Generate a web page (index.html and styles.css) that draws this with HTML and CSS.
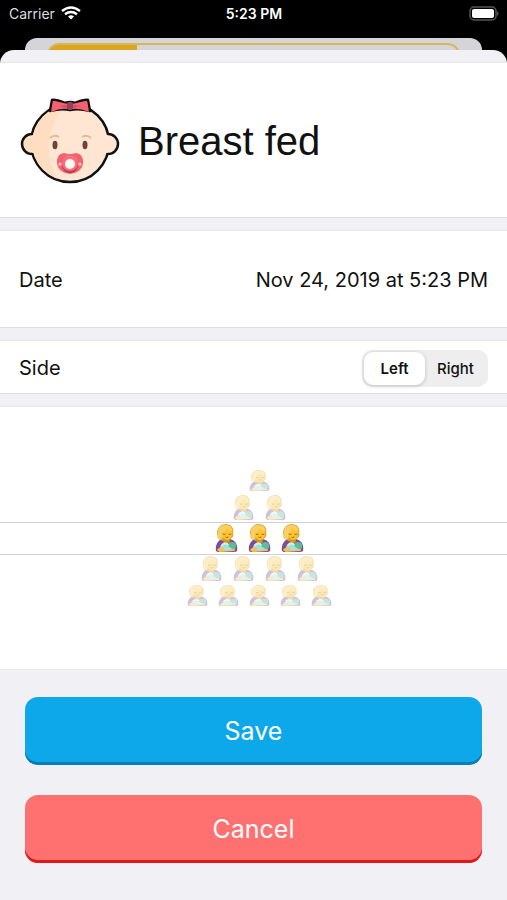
FILE: index.html
```html
<!DOCTYPE html>
<html lang="en">
<head>
    <meta charset="UTF-8">
    <meta name="viewport" content="width=device-width, initial-scale=1.0">
    <title>Breast fed</title>
    <link rel="stylesheet" href="styles.css">
</head>
<body>
    <svg class="defs" aria-hidden="true">
        <symbol id="nursing" viewBox="0 0 24 28" preserveAspectRatio="none">
            <path d="M1 27 C0 21 3 16 9 14 L15 15 C21 16 24 20 23 27 Q22 28 19 28 L3 28Z" fill="#7f4a9a"/>
            <path d="M5 15 C2 14 3 11 2 9 C2 4 6 0 11 0 C17 0 20 4 19 9 C20 12 18 14 16 15 L8 17Z" fill="#e5a92c"/>
            <path d="M9 13 L16 14 L15 19 L9 19Z" fill="#d99518"/>
            <path d="M7 7 C9 5 11 4 12 3 C14 5 17 6 18 8 C18 12 16 16 13 16 C9 16 7 12 7 7Z" fill="#fbc52f"/>
            <path d="M5 16 C1 14 3 11 3 8 C3 3 7 1 11 1 C15 1 18 3 18 7 C15 7 13 5 12 4 C11 7 8 8 8 10 C8 13 8 15 5 16Z" fill="#f6cf67"/>
            <path d="M8 10 q2 1 3 0 M14 10 q1 1 3 0 M11 13 q1 1 3 0" stroke="#97600f" fill="none"/>
            <path d="M5 24 C6 19 10 17 14 20 L16 26 L10 27Z" fill="#9bdcdd"/>
            <path d="M7 22 Q11 17 15 22" stroke="#d4f0ec" stroke-width="2" fill="none"/>
            <ellipse cx="18" cy="22" rx="4" ry="4" fill="#5cbd98"/>
            <path d="M2 26 Q5 22 9 24 L20 25 Q22 26 20 27 L5 28Z" fill="#f1c452"/>
            <path d="M9 23 Q14 21 18 25 L12 27 Q9 26 9 23Z" fill="#a8dfdf"/>
        </symbol>
    </svg>

    <header class="status-bar">
        <div class="carrier">
            <span>Carrier</span>
            <svg width="20" height="14" viewBox="0 0 20 14" aria-hidden="true">
                <g fill="none" stroke="#fff" stroke-width="2.4">
                    <path d="M1 5 Q10 -2 19 5"/>
                    <path d="M4 8.200 Q10 3.800 16 8.200"/>
                </g>
                <path d="M7 10.400 Q10 8 13 10.400 L10 13.600Z" fill="#fff"/>
            </svg>
        </div>
        <span class="time">5:23 PM</span>
        <svg class="battery" width="30" height="15" viewBox="0 0 30 15" aria-hidden="true">
            <rect x="1" y="1" width="26" height="13" rx="4" fill="#000" stroke="#555" stroke-width="1.500"/>
            <rect x="3" y="3" width="22" height="9" rx="2" fill="#fff"/>
            <path d="M28 5 q3 2.500 0 5Z" fill="#555"/>
        </svg>
    </header>

    <div class="back-card"><div class="back-progress"></div></div>

    <main class="sheet">
        <section class="cell title-cell">
            <svg width="101" height="88" viewBox="0 0 101 88" aria-hidden="true">
                <defs>
                    <clipPath id="face"><circle cx="51" cy="46" r="38"/></clipPath>
                </defs>
                <g stroke="#111" stroke-width="2.500">
                    <circle cx="13" cy="47" r="10" fill="#ffddc0"/>
                    <circle cx="89" cy="47" r="10" fill="#ffe6d2"/>
                    <circle cx="51" cy="46" r="39" fill="#ffe6d2"/>
                </g>
                <g clip-path="url(#face)">
                    <path d="M0 0 H58 C28 18 20 58 43 90 H0Z" fill="#ffddc0"/>
                </g>
                <circle cx="14" cy="47" r="9" fill="#ffddc0"/>
                <circle cx="88" cy="47" r="9" fill="#ffe6d2"/>
                <path d="M33 3 Q36 2 46 6 Q51 4 56 6 Q66 2 69 3 L71 14 Q60 11 51 13 Q42 11 31 14Z" fill="#f5616f" stroke="#111" stroke-width="2.500" stroke-linejoin="round"/>
                <path d="M32 15 L34 4 Q41 5 49 7 V12 Q41 11 32 15Z M70 15 L68 4 Q61 5 53 7 V12 Q61 11 70 15Z" fill="#f5616f"/>
                <path d="M40 9 L48 8 V11Z M62 9 L54 8 V11Z" fill="#d84c62"/>
                <rect x="48" y="5" width="6" height="8" rx="2" fill="#96405a"/>
                <path d="M31 41 Q35 37 40 40 M63 40 Q68 37 72 41" fill="none" stroke="#e3b997" stroke-width="2"/>
                <ellipse cx="36" cy="48" rx="2.500" ry="4.200" fill="#70403b"/>
                <ellipse cx="66" cy="48" rx="2.500" ry="4.200" fill="#70403b"/>
                <path d="M45 56 Q51 58 57 56 Q65 57 64 67 Q62 76 51 77 Q40 76 38 67 Q37 57 45 56Z" fill="#f4626f"/>
                <circle cx="51" cy="68" r="8" fill="#b83c50"/>
                <circle cx="51" cy="66" r="8" fill="#f4707c"/>
                <circle cx="51" cy="67" r="5" fill="#fff8ef"/>
                <circle cx="41" cy="67" r="1.500" fill="#ffd2cd"/>
                <circle cx="61" cy="67" r="1.500" fill="#ffd2cd"/>
            </svg>
            <h1>Breast fed</h1>
        </section>

        <section class="cell date-cell">
            <span>Date</span>
            <time datetime="2019-11-24T17:23">Nov 24, 2019 at 5:23 PM</time>
        </section>

        <section class="cell side-cell">
            <span id="side-label">Side</span>
            <div class="segmented" role="radiogroup" aria-labelledby="side-label">
                <input type="radio" name="side" id="left" checked>
                <label for="left">Left</label>
                <input type="radio" name="side" id="right">
                <label for="right">Right</label>
            </div>
        </section>

        <section class="picker">
            <div class="picker-row far"><svg><use href="#nursing"/></svg></div>
            <div class="picker-row near"><svg><use href="#nursing"/></svg><svg><use href="#nursing"/></svg></div>
            <div class="picker-row selected"><svg><use href="#nursing"/></svg><svg><use href="#nursing"/></svg><svg><use href="#nursing"/></svg></div>
            <div class="picker-row near"><svg><use href="#nursing"/></svg><svg><use href="#nursing"/></svg><svg><use href="#nursing"/></svg><svg><use href="#nursing"/></svg></div>
            <div class="picker-row far"><svg><use href="#nursing"/></svg><svg><use href="#nursing"/></svg><svg><use href="#nursing"/></svg><svg><use href="#nursing"/></svg><svg><use href="#nursing"/></svg></div>
        </section>

        <div class="actions">
            <button type="button" class="save">Save</button>
            <button type="button" class="cancel">Cancel</button>
        </div>
    </main>
</body>
</html>
```
FILE: styles.css
```css
* { box-sizing: border-box; }
body {
    margin: 0;
    min-height: 100vh;
    display: flex;
    flex-direction: column;
    background: #000;
    color: #111;
    font-family: Inter, "Liberation Sans", sans-serif;
    font-size: 20px;
}
.defs { position: absolute; width: 0; height: 0; }

.status-bar {
    display: grid;
    grid-template-columns: 1fr auto 1fr;
    align-items: center;
    height: 38px;
    padding: 0 8px 12px 9px;
    color: #fff;
    font-size: 14px;
}
.carrier { display: flex; align-items: center; gap: 6px; color: #ddd; }
.time { font-weight: 600; }
.battery { justify-self: end; }

.back-card {
    height: 12px;
    margin: 0 25px;
    padding: 5px 22px 0;
    background: #d5d5d9;
    border-radius: 12px 12px 0 0;
    overflow: hidden;
}
.back-progress {
    height: 24px;
    border: 2px solid #d8b658;
    border-radius: 12px;
    background: linear-gradient(to right, #dca520 88px, transparent 88px);
}

.sheet {
    flex: 1;
    padding-top: 12px;
    background: #f0f0f5;
    border-radius: 14px 14px 0 0;
}
.cell {
    display: flex;
    align-items: center;
    justify-content: space-between;
    padding: 2px 19px 0;
    background: #fff;
    border-top: 1px solid #e6e6ea;
    border-bottom: 1px solid #dddde1;
    margin-bottom: 12px;
}
.title-cell { height: 156px; justify-content: flex-start; gap: 18px; }
.title-cell h1 {
    margin: 0;
    font-family: "Liberation Sans", Arial, sans-serif;
    font-size: 40px;
    font-weight: 400;
}
.date-cell { height: 98px; }
.side-cell { height: 54px; }

.segmented {
    display: flex;
    padding: 2px;
    width: 126px;
    height: 37px;
    border-radius: 10px;
    background: #eeeeef;
    font-size: 15px;
    font-weight: 500;
}
.segmented input { position: absolute; opacity: 0; }
.segmented label {
    flex: 1;
    display: flex;
    align-items: center;
    justify-content: center;
    border-radius: 9px;
}
.segmented input:checked + label {
    background: #fff;
    font-weight: 600;
    box-shadow: 0 1px 4px rgba(0, 0, 0, 0.2);
}

.picker {
    display: flex;
    flex-direction: column;
    align-items: center;
    justify-content: center;
    height: 264px;
    padding-left: 12px;
    background: #fff;
    border-top: 1px solid #e6e6ea;
    border-bottom: 1px solid #e6e6ea;
}
.picker-row { display: flex; justify-content: center; align-items: center; }
.picker-row svg { width: 21px; height: 25px; }
.near { height: 28px; gap: 11px; opacity: 0.35; }
.far { height: 26px; gap: 10px; opacity: 0.35; }
.picker-row.far svg { height: 21px; }
.selected {
    align-self: stretch;
    height: 33px;
    gap: 10px;
    margin-left: -12px;
    padding-left: 12px;
    border-top: 1px solid #d2d2d4;
    border-bottom: 1px solid #d2d2d4;
}
.picker-row.selected svg { width: 23px; height: 28px; }

.actions {
    display: flex;
    flex-direction: column;
    gap: 30px;
    padding: 27px 25px 36px;
}
.actions button {
    height: 68px;
    padding: 0;
    border: 0;
    border-radius: 13px;
    color: #fff;
    font-family: inherit;
    font-size: 25px;
}
.save { background: #0ca8ea; box-shadow: inset 0 -3px #087eb2; }
.cancel { background: #ff7070; box-shadow: inset 0 -3px #e21818; }
```
